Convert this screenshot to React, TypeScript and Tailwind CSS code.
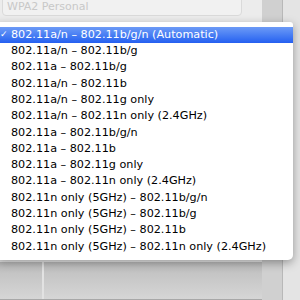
const options = [
  '802.11a/n – 802.11b/g/n (Automatic)',
  '802.11a/n – 802.11b/g',
  '802.11a – 802.11b/g',
  '802.11a/n – 802.11b',
  '802.11a/n – 802.11g only',
  '802.11a/n – 802.11n only (2.4GHz)',
  '802.11a – 802.11b/g/n',
  '802.11a – 802.11b',
  '802.11a – 802.11g only',
  '802.11a – 802.11n only (2.4GHz)',
  '802.11n only (5GHz) – 802.11b/g/n',
  '802.11n only (5GHz) – 802.11b/g',
  '802.11n only (5GHz) – 802.11b',
  '802.11n only (5GHz) – 802.11n only (2.4GHz)',
];

const App = () => {
  return (
    <div className="relative w-[300px] h-[300px] overflow-hidden bg-[#ececec] font-['DejaVu_Sans',sans-serif]">
      {/* window behind the menu */}
      <div className="flex h-full">
        <div className="flex flex-col w-[262px]">
          <div className="h-[262px] bg-[#ececec] pl-[2px]">
            <div className="flex items-center h-[18px] -mt-[2px] rounded-b border border-[#dadada] bg-[#f1f1f1] w-[240px] px-[4px]">
              <span className="text-[11px] text-[#c8c8c8]">WPA2 Personal</span>
            </div>
          </div>
          <div className="flex-1 flex bg-gradient-to-b from-[#bdbdbd] to-[#d6d6d6] border-b border-[#a8a8a8]">
            <div className="w-[42px]" />
            <div className="w-[2px] bg-[#e2e2e2]" />
          </div>
        </div>
        <div className="w-[20px] bg-[#d0d0d0]" />
        <div className="w-[1px] bg-[#b8b8b8]" />
        <div className="flex-1 bg-[#e4e4e4]" />
      </div>

      {/* popup menu */}
      <div className="absolute left-[-4px] top-[22px] w-[297px] bg-white rounded-tr-[3px] rounded-b-[5px] py-[5px] shadow-[0_3px_10px_rgba(0,0,0,0.35)]">
        {options.map((opt, i) => (
          <div
            key={i}
            className={
              i === 0
                ? 'flex items-center h-[16.3px] bg-gradient-to-b from-[#6c9af6] to-[#245ff0] text-white'
                : 'flex items-center h-[16.3px] text-black'
            }
          >
            <span className="shrink-0 w-[15px] text-[9px] pl-[4px]">{i === 0 ? '✓' : ''}</span>
            <span className="shrink-0 text-[11.2px] whitespace-nowrap">{opt}</span>
          </div>
        ))}
      </div>
    </div>
  );
};

export default App;
